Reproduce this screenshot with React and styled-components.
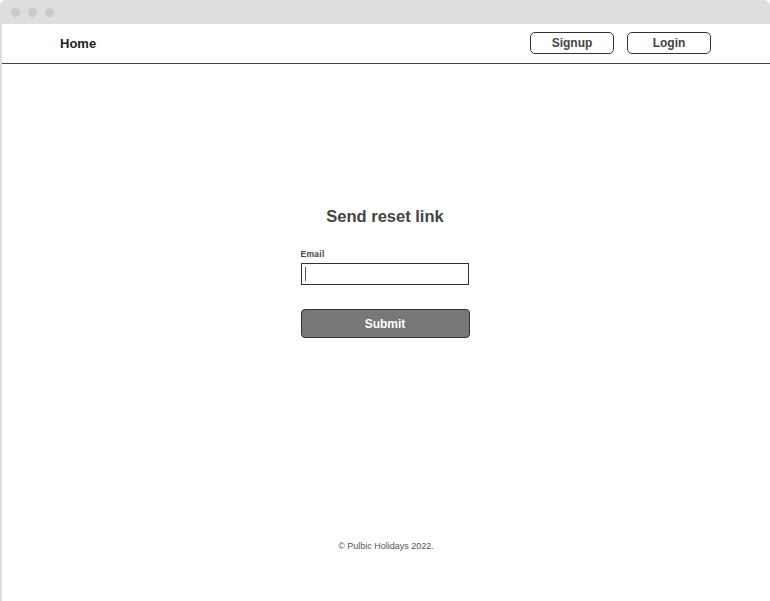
import React from 'react'
import styled, { createGlobalStyle } from 'styled-components'

const GlobalStyle = createGlobalStyle`
    html, body {
        margin: 0;
        padding: 0;
        background: #ffffff;
    }
    * {
        box-sizing: border-box;
    }
`;

const Window = styled.div`
    display: flex;
    flex-direction: column;
    min-height: 601px;
    background: #dedede;
    border-radius: 6px 6px 0 0;
    font-family: "Liberation Sans", Arial, sans-serif;
`;

const TitleBar = styled.div`
    height: 24px;
    display: flex;
    align-items: center;
    gap: 8px;
    padding-left: 11px;
`;

const Dot = styled.span`
    width: 9px;
    height: 9px;
    border-radius: 50%;
    background: #c9c9c9;
`;

const Page = styled.div`
    flex: 1;
    display: flex;
    flex-direction: column;
    margin-left: 2px;
    background: #ffffff;
`;

const Header = styled.header`
    height: 40px;
    display: flex;
    align-items: center;
    justify-content: space-between;
    padding: 0 59px 1px 58px;
    border-bottom: 1px solid #444444;
`;

const HomeLink = styled.span`
    font-size: 13px;
    font-weight: 700;
    color: #222222;
`;

const Nav = styled.nav`
    display: flex;
    gap: 13px;
`;

const NavButton = styled.button`
    width: 84px;
    height: 22px;
    padding: 0;
    background: #ffffff;
    border: 1px solid #333333;
    border-radius: 5px;
    font-family: inherit;
    font-size: 12px;
    font-weight: 700;
    color: #444444;
`;

const Main = styled.main`
    flex: 1;
    display: flex;
    flex-direction: column;
    align-items: center;
    padding: 142px 2px 0 0;
`;

const Form = styled.form`
    width: 169px;
    display: flex;
    flex-direction: column;
`;

const Heading = styled.h1`
    margin: 0 0 23px;
    text-align: center;
    font-size: 16.5px;
    line-height: 20px;
    font-weight: 700;
    color: #444444;
`;

const Label = styled.label`
    font-size: 8.5px;
    line-height: 11px;
    font-weight: 700;
    letter-spacing: 0.3px;
    color: #444444;
    margin-bottom: 3px;
`;

const FakeInput = styled.div`
    height: 22px;
    width: 168px;
    border: 1px solid #333333;
    display: flex;
    align-items: center;
    padding-left: 3px;
    margin-bottom: 24px;
`;

const Caret = styled.span`
    display: block;
    width: 1px;
    height: 14px;
    background: #555555;
`;

const Submit = styled.button`
    height: 29px;
    width: 169px;
    background: #777777;
    border: 1px solid #333333;
    border-radius: 4px;
    font-family: inherit;
    font-size: 12px;
    font-weight: 700;
    color: #ffffff;
`;

const Footer = styled.footer`
    padding-bottom: 49px;
    text-align: center;
    font-size: 9px;
    line-height: 11px;
    color: #555555;
`;

const App = () => {
    return (
        <>
            <GlobalStyle />
            <Window>
                <TitleBar>
                    <Dot />
                    <Dot />
                    <Dot />
                </TitleBar>
                <Page>
                    <Header>
                        <HomeLink>Home</HomeLink>
                        <Nav>
                            <NavButton>Signup</NavButton>
                            <NavButton>Login</NavButton>
                        </Nav>
                    </Header>
                    <Main>
                        <Form onSubmit={e => e.preventDefault()}>
                            <Heading>Send reset link</Heading>
                            <Label>Email</Label>
                            <FakeInput>
                                <Caret />
                            </FakeInput>
                            <Submit type="submit">Submit</Submit>
                        </Form>
                    </Main>
                    <Footer>© Pulbic Holidays 2022.</Footer>
                </Page>
            </Window>
        </>
    )
}

export default App
